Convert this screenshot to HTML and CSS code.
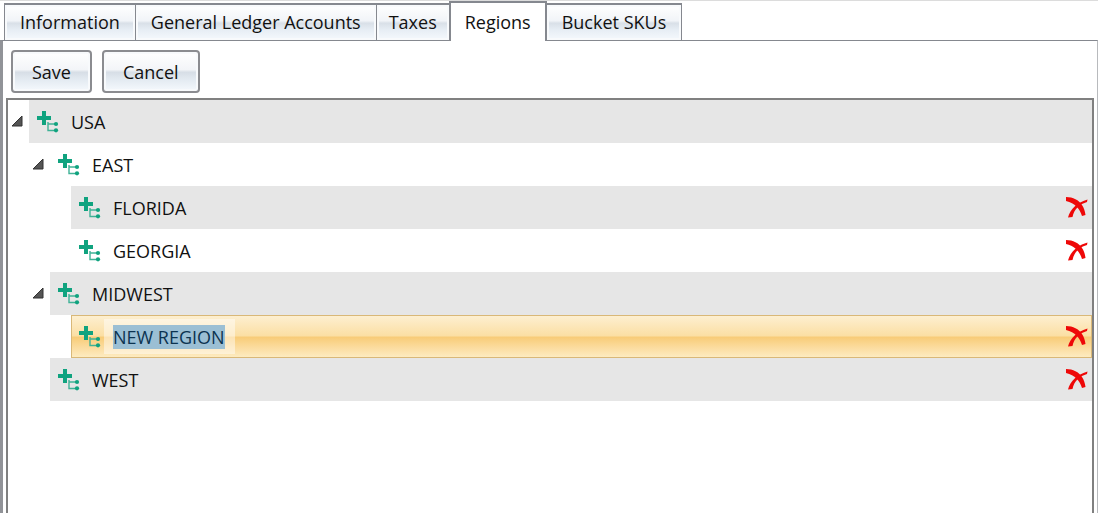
FILE: index.html
```html
<!DOCTYPE html>
<html lang="en">
<head>
    <meta charset="UTF-8">
    <meta name="viewport" content="width=device-width, initial-scale=1.0">
    <title>Regions</title>
    <link rel="stylesheet" href="styles.css">
</head>
<body>
    <!-- Shared icons -->
    <svg class="icon-defs" aria-hidden="true">
        <symbol id="icon-add" viewBox="0 0 22 22">
            <path d="M5 0h4v5h5v4H9v5H5V9H0V5h5z" fill="#10a37f"/>
            <path d="M11 11v8.500h8M11 13h8" fill="none" stroke="#3fb296" stroke-width="1.400"/>
            <circle cx="19" cy="13" r="2.100" fill="#10a37f"/>
            <circle cx="19" cy="19.300" r="2.100" fill="#10a37f"/>
        </symbol>
        <symbol id="icon-delete" viewBox="0 0 22 22">
            <path d="M0 0C7 0 13 3 16 8C18 11 19 14 19.500 18L16 19C14 12 9 6 0 4Z" fill="#ee0808"/>
            <path d="M21.500 2.500L21 5C14 7 8 12 6.500 20L2 20.500C4 12 12 5 21.500 2.500Z" fill="#ee0808"/>
        </symbol>
        <symbol id="icon-expanded" viewBox="0 0 12 12">
            <path d="M11 1v10H1z" fill="#555" stroke="#333" stroke-width="1"/>
        </symbol>
    </svg>

    <nav class="tabs">
        <button type="button" class="tab">Information</button>
        <button type="button" class="tab">General Ledger Accounts</button>
        <button type="button" class="tab narrow">Taxes</button>
        <button type="button" class="tab active">Regions</button>
        <button type="button" class="tab">Bucket SKUs</button>
    </nav>

    <main class="panel">
        <div class="toolbar">
            <button type="button" class="btn">Save</button>
            <button type="button" class="btn">Cancel</button>
        </div>

        <ul class="tree">
            <li>
                <div class="row">
                    <button type="button" class="toggle" aria-label="Collapse USA"><svg><use href="#icon-expanded"/></svg></button>
                    <div class="node shaded">
                        <button type="button" class="icon-btn" aria-label="Add region"><svg><use href="#icon-add"/></svg></button>
                        <span class="name">USA</span>
                    </div>
                </div>
                <ul>
                    <li>
                        <div class="row">
                            <button type="button" class="toggle" aria-label="Collapse EAST"><svg><use href="#icon-expanded"/></svg></button>
                            <div class="node">
                                <button type="button" class="icon-btn" aria-label="Add region"><svg><use href="#icon-add"/></svg></button>
                                <span class="name">EAST</span>
                            </div>
                        </div>
                        <ul>
                            <li>
                                <div class="row leaf">
                                    <div class="node shaded">
                                        <button type="button" class="icon-btn" aria-label="Add region"><svg><use href="#icon-add"/></svg></button>
                                        <span class="name">FLORIDA</span>
                                        <button type="button" class="icon-btn delete" aria-label="Delete FLORIDA"><svg><use href="#icon-delete"/></svg></button>
                                    </div>
                                </div>
                            </li>
                            <li>
                                <div class="row leaf">
                                    <div class="node">
                                        <button type="button" class="icon-btn" aria-label="Add region"><svg><use href="#icon-add"/></svg></button>
                                        <span class="name">GEORGIA</span>
                                        <button type="button" class="icon-btn delete" aria-label="Delete GEORGIA"><svg><use href="#icon-delete"/></svg></button>
                                    </div>
                                </div>
                            </li>
                        </ul>
                    </li>
                    <li>
                        <div class="row">
                            <button type="button" class="toggle" aria-label="Collapse MIDWEST"><svg><use href="#icon-expanded"/></svg></button>
                            <div class="node shaded">
                                <button type="button" class="icon-btn" aria-label="Add region"><svg><use href="#icon-add"/></svg></button>
                                <span class="name">MIDWEST</span>
                            </div>
                        </div>
                        <ul>
                            <li>
                                <div class="row leaf">
                                    <div class="node selected">
                                        <button type="button" class="icon-btn" aria-label="Add region"><svg><use href="#icon-add"/></svg></button>
                                        <input type="text" id="regionName" class="name-input" value="NEW REGION" aria-label="Region name">
                                        <button type="button" class="icon-btn delete" aria-label="Delete NEW REGION"><svg><use href="#icon-delete"/></svg></button>
                                    </div>
                                </div>
                            </li>
                        </ul>
                    </li>
                    <li>
                        <div class="row leaf">
                            <div class="node shaded">
                                <button type="button" class="icon-btn" aria-label="Add region"><svg><use href="#icon-add"/></svg></button>
                                <span class="name">WEST</span>
                                <button type="button" class="icon-btn delete" aria-label="Delete WEST"><svg><use href="#icon-delete"/></svg></button>
                            </div>
                        </div>
                    </li>
                </ul>
            </li>
        </ul>
    </main>

    <script>
        // Start with the new region's name ready to be typed over
        const regionName = document.getElementById('regionName');
        regionName.focus();
        regionName.select();
    </script>
</body>
</html>
```
FILE: styles.css
```css
* {
    margin: 0;
    padding: 0;
    box-sizing: border-box;
}

body {
    display: flex;
    flex-direction: column;
    height: 100vh;
    overflow: hidden;
    border-top: 1px solid #dcdcdc;
    background: #fff;
    color: #111;
    font-family: 'Open Sans', 'Noto Sans', sans-serif;
    font-size: 18px;
    line-height: 24px;
}

button,
input {
    font: inherit;
    color: inherit;
}

button {
    background: none;
    border: none;
}

ul {
    list-style: none;
}

.icon-defs {
    display: none;
}

/* Tabs */
.tabs {
    display: flex;
    align-items: flex-end;
    padding-left: 4px;
}

.tab {
    height: 37px;
    padding: 0 15px 2px;
    margin-right: -1px;
    border: 1px solid #85888f;
    border-top-width: 2px;
    border-bottom: none;
    background: linear-gradient(#fff 0%, #f1f4f8 45%, #d9e0e8 52%, #e6edf4 70%, #f5f9fd 100%);
    box-shadow: inset 0 0 0 2px #f8fafc;
    white-space: nowrap;
}

.tab.narrow {
    padding-left: 12px;
    padding-right: 12px;
}

.tab.active {
    position: relative;
    z-index: 1;
    height: 40px;
    padding: 0 14px;
    margin-bottom: -1px;
    border-left-width: 2px;
    border-right-width: 2px;
    background: #fff;
    box-shadow: none;
}

/* Panel */
.panel {
    flex: 1;
    display: flex;
    flex-direction: column;
    padding: 9px 3px 0;
    border: 1px solid #85888f;
    border-left: 3px solid #919398;
    border-right-color: #b8babd;
    border-bottom: none;
}

.toolbar {
    display: flex;
    gap: 10px;
    padding: 0 5px;
    margin-bottom: 5px;
}

.btn {
    height: 43px;
    padding: 0 19px;
    border: 2px solid #8b8c90;
    border-radius: 4px;
    background: linear-gradient(#fff 0%, #f3f5f8 45%, #d7dee6 52%, #e3eaf1 70%, #f5f9fd 100%);
    box-shadow: inset 0 0 0 2px #f8fafc;
}

/* Region tree */
.tree {
    flex: 1;
    border: 2px solid #808080;
    border-bottom: none;
}

.tree ul {
    padding-left: 21px;
}

.row {
    display: flex;
    height: 43px;
}

.row.leaf {
    padding-left: 21px;
}

.toggle {
    display: flex;
    width: 21px;
    padding: 15px 0 0 3px;
}

.toggle svg {
    width: 12px;
    height: 12px;
}

.node {
    flex: 1;
    display: flex;
    align-items: center;
    padding: 0 4px 0 8px;
}

.node.shaded {
    background: #e6e6e6;
}

.node.selected {
    border: 1px solid #d9b878;
    padding: 0 3px 0 7px;
    background: linear-gradient(#fdefd0 0%, #fbdfa4 48%, #f8cc78 52%, #fbdb9c 75%, #fdebc0 100%);
}

.icon-btn {
    display: flex;
    width: 22px;
    height: 22px;
}

.icon-btn svg {
    width: 22px;
    height: 22px;
}

.icon-btn.delete {
    margin-left: auto;
}

.name {
    margin: 1px 0 0 12px;
}

.name-input {
    width: 131px;
    height: 35px;
    margin-left: 3px;
    padding: 1px 9px 0;
    border: none;
    outline: none;
    background: rgba(255, 255, 255, 0.45);
}

.name-input::selection {
    background: #9bbfd4;
    color: #0c3350;
}
```
